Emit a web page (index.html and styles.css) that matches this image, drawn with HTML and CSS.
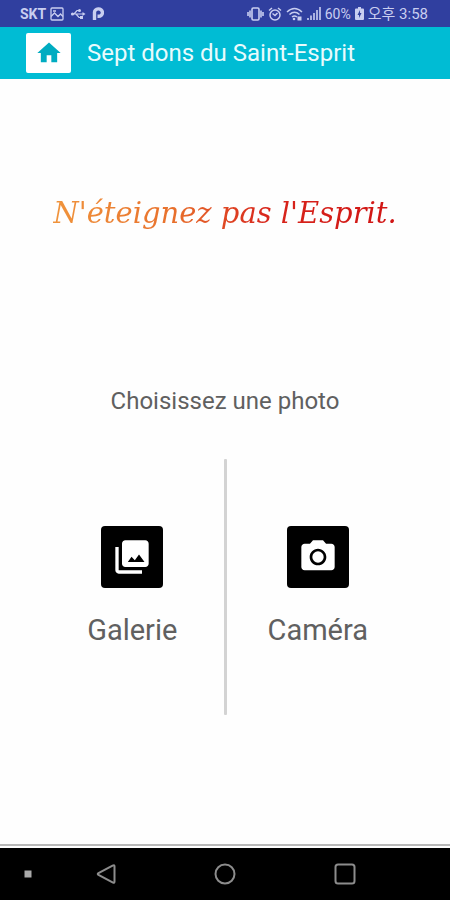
FILE: index.html
```html
<!DOCTYPE html>
<html lang="fr">
<head>
<meta charset="utf-8">
<meta name="viewport" content="width=device-width, initial-scale=1">
<title>Sept dons du Saint-Esprit</title>
<link rel="stylesheet" href="styles.css">
</head>
<body>
<div class="status">
  <div class="status-group">
    <span class="carrier">SKT</span>
    <svg class="status-picture" width="14" height="14" viewBox="0 0 14 14" fill="none" stroke="currentColor" stroke-width="1.3"><rect x="1" y="1" width="12" height="12" rx="1"/><path d="M1 9.500L4.500 6L8 9.500L10.500 7L13 9.500M3 4h3"/></svg>
    <svg class="status-usb" width="16" height="12" viewBox="0 0 16 12" fill="none" stroke="currentColor" stroke-width="1.2"><path d="M2 6H14M4 6L7 2.500H9M6 6L9 9.500H11"/><circle cx="2.500" cy="6" r="1.600" fill="currentColor" stroke="none"/><circle cx="9.500" cy="2.500" r="1.500" fill="currentColor" stroke="none"/><path d="M10 8h3v3h-3zM12.500 4L15.500 6L12.500 8z" fill="currentColor" stroke="none"/></svg>
    <svg width="12" height="14" viewBox="0 0 12 14" fill="none" stroke="currentColor"><path d="M2.500 13V6A4 3.700 0 1 1 6.500 9.300H5.500" stroke-width="3.400"/></svg>
  </div>
  <div class="status-group status-right">
    <svg width="17" height="14" viewBox="0 0 17 14" fill="none" stroke="currentColor" stroke-width="1.600"><rect x="5" y="1" width="7" height="12" rx="1.200"/><path d="M3 3.500v7M14 3.500v7M1 5v4M16 5v4"/></svg>
    <svg width="14" height="14" viewBox="0 0 14 14" fill="none" stroke="currentColor" stroke-width="1.500"><circle cx="7" cy="8" r="5"/><path d="M1 3.500L4 1M10 1l3 2.500M4.500 6.500L7 8.500L9.500 6"/></svg>
    <svg width="17" height="14" viewBox="0 0 17 14" fill="none" stroke="currentColor" stroke-width="1.500"><path d="M1 5Q8.500-2 16 5M3.500 7.500Q8.500 3 13.500 7.500M6 10Q8.500 8 11 10"/><circle cx="8" cy="12" r="1.300" fill="currentColor" stroke="none"/><path d="M11.500 9.500h4v4h-4z" fill="currentColor" stroke="none"/></svg>
    <svg width="14" height="13" viewBox="0 0 14 13" fill="currentColor"><path d="M0 11h2v2H0zM3 8.500h2V13H3zM6 6h2v7H6zM9 3h2v10H9zM12 0h2v13h-2z" opacity=".8"/></svg>
    <span class="battery-level">60%</span>
    <svg width="9" height="13" viewBox="0 0 9 13" fill="currentColor"><path fill-rule="evenodd" d="M3 0h3v1.500h2q1 0 1 1V12q0 1-1 1H1q-1 0-1-1V2.500q0-1 1-1h2zM5 3L2.500 8H4v3l2.500-5H5z"/></svg>
    <span class="clock">오후 3:58</span>
  </div>
</div>
<header class="appbar">
  <button class="home" type="button" aria-label="Accueil">
    <svg width="28" height="28" viewBox="0 0 24 24" fill="currentColor"><path d="M10 20v-6h4v6h5v-8h3L12 3 2 12h3v8z"/></svg>
  </button>
  <h1 class="title">Sept dons du Saint-Esprit</h1>
</header>
<main class="content">
  <p class="verse"><span class="verse-ink">N'éteignez pas l'Esprit.</span></p>
  <h2 class="prompt">Choisissez une photo</h2>
  <div class="choices">
    <button class="choice" type="button">
      <span class="tile"><svg width="40" height="40" viewBox="0 0 24 24" fill="currentColor"><path d="M22 16V4c0-1.100-.9-2-2-2H8c-1.100 0-2 .9-2 2v12c0 1.100.9 2 2 2h12c1.100 0 2-.9 2-2zm-12.500-1l2.200-3.200L13.700 14l2.500-3.500L19.500 15zM2 6v14c0 1.100.9 2 2 2h14v-2H4V6H2z"/></svg></span>
      <span class="label">Galerie</span>
    </button>
    <div class="divider"></div>
    <button class="choice" type="button">
      <span class="tile"><svg width="40" height="40" viewBox="0 0 24 24" fill="currentColor"><circle cx="12" cy="12" r="3.400"/><path d="M9 2L7.170 4H4c-1.100 0-2 .9-2 2v12c0 1.100.9 2 2 2h16c1.100 0 2-.9 2-2V6c0-1.100-.9-2-2-2h-3.170L15 2H9zm3 15c-2.760 0-5-2.240-5-5s2.240-5 5-5 5 2.240 5 5-2.240 5-5 5z"/></svg></span>
      <span class="label">Caméra</span>
    </button>
  </div>
</main>
<nav class="navbar">
  <button class="nav-button nav-dot" type="button" aria-label="Masquer la barre"><svg width="8" height="8" viewBox="0 0 8 8"><path d="M0.500 0.500h7v7h-7z" fill="#aaa"/></svg></button>
  <button class="nav-button" type="button" aria-label="Retour"><svg width="24" height="24" viewBox="0 0 24 24"><path d="M19 3.500Q20.500 2.500 20.500 4.500V19.500Q20.500 21.500 19 20.500L4.500 13Q3 12 4.500 11z"/></svg></button>
  <button class="nav-button" type="button" aria-label="Écran d'accueil"><svg width="24" height="24" viewBox="0 0 24 24"><circle cx="12" cy="12" r="9.500"/></svg></button>
  <button class="nav-button" type="button" aria-label="Applications récentes"><svg width="24" height="24" viewBox="0 0 24 24"><rect x="2.500" y="2.500" width="19" height="19" rx="2.500"/></svg></button>
</nav>
</body>
</html>
```
FILE: styles.css
```css
* { box-sizing: border-box; }

body {
  margin: 0;
  min-height: 100vh;
  display: flex;
  flex-direction: column;
  background: #fefefe;
  color: #606060;
  font-family: Roboto, "Noto Sans CJK KR", sans-serif;
}

button {
  padding: 0;
  border: 0;
  background: none;
  color: inherit;
  font: inherit;
}

svg { display: block; flex: none; }
h1, h2, p { margin: 0; font-weight: 400; }

.status {
  display: flex;
  justify-content: space-between;
  align-items: center;
  height: 27px;
  padding: 0 22px 0 20px;
  background: #303f9f;
  color: #c9cef0;
  font-size: 14px;
  line-height: 16px;
}

.status-group { display: flex; align-items: center; gap: 4px; }
.status-usb { margin: 0 2px; }
.carrier { font-weight: 700; }
.clock { font-size: 15px; white-space: nowrap; }

.appbar {
  display: flex;
  align-items: center;
  gap: 16px;
  height: 52px;
  padding: 0 26px;
  background: #00bcd4;
}

.home {
  display: grid;
  place-items: center;
  width: 45px;
  height: 40px;
  border-radius: 2px;
  background: #fff;
  color: #00acc1;
}

.title {
  color: #e8fbfd;
  font-size: 24px;
  line-height: 32px;
}

.content {
  flex: 1;
  display: flex;
  flex-direction: column;
  padding-bottom: 129px;
  border-bottom: 2px solid #b8b8b8;
}

.verse {
  padding-top: 112px;
  text-align: center;
  font: italic 29px/44px "Lucida Calligraphy", "Monotype Corsiva", "DejaVu Serif", serif;
}

.verse-ink {
  background: linear-gradient(90deg, #f0943c, #e8702c 35%, #d8261c 62%, #d01414);
  background-clip: text;
  -webkit-background-clip: text;
  color: transparent;
}

.prompt {
  margin: 150px 0 42px;
  text-align: center;
  font-size: 24px;
  line-height: 32px;
}

.choices {
  flex: 1;
  display: grid;
  grid-template-columns: 1fr 3px 1fr;
  padding: 0 41px;
}

.choice {
  display: flex;
  flex-direction: column;
  align-items: center;
  justify-content: center;
  gap: 24px;
}

.divider { background: #d3d3d3; border-radius: 1px; }

.tile {
  display: grid;
  place-items: center;
  width: 62px;
  height: 62px;
  border-radius: 4px;
  background: #000;
  color: #fff;
}

.label { font-size: 29px; line-height: 36px; }

.navbar {
  display: grid;
  grid-template-columns: 46px repeat(3, 1fr);
  align-items: center;
  height: 52px;
  margin-top: 2px;
  padding-right: 45px;
  background: #000;
}

.nav-button {
  display: grid;
  place-items: center;
  height: 48px;
  fill: none;
  stroke: #8c8c8c;
  stroke-width: 2;
}

.nav-dot { padding-left: 10px; stroke: none; }
```
